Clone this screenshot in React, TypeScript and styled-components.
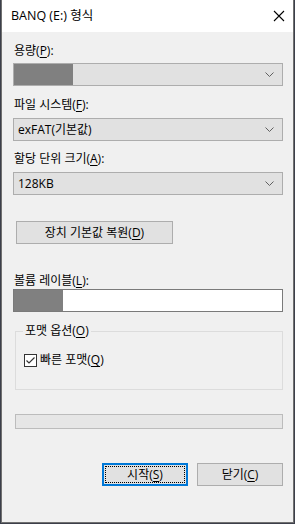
import React from 'react';
import styled, { createGlobalStyle } from 'styled-components';

const GlobalStyle = createGlobalStyle`
  html, body {
    margin: 0;
    padding: 0;
    background: #3c3f4a;
  }
  body {
    font-family: "Open Sans", "Noto Sans CJK KR", sans-serif;
    font-size: 12px;
    color: #000;
  }
`;

const Screen = styled.div`
  width: 295px;
  height: 524px;
  padding-left: 1px;
  box-sizing: border-box;
`;

const Window = styled.div`
  width: 293px;
  height: 523px;
  box-sizing: border-box;
  border: 1px solid #707070;
  border-top: none;
  background: #f0f0f0;
  display: flex;
  flex-direction: column;
`;

const TitleBar = styled.div`
  height: 31px;
  flex: none;
  background: #fff;
  display: flex;
  align-items: center;
  justify-content: space-between;
  padding: 0 8px 1px 9px;
`;

const Title = styled.span`
  font-size: 12.5px;
  line-height: 16px;
`;

const Body = styled.div`
  flex: 1;
  display: flex;
  flex-direction: column;
  padding: 0 10px 0 11px;
`;

const Label = styled.div<{ $top: number }>`
  margin-top: ${p => p.$top}px;
  padding-left: 1px;
  line-height: 16px;
  height: 16px;
`;

const Key = styled.span`
  text-decoration: underline;
  text-underline-offset: 2px;
`;

const Combo = styled.div<{ $top: number }>`
  margin-top: ${p => p.$top}px;
  height: 23px;
  box-sizing: border-box;
  border: 1px solid #adadad;
  background: #e1e1e1;
  display: flex;
  align-items: center;
  padding: 0 8px 0 4px;
  position: relative;
`;

const ComboText = styled.span`
  flex: 1;
  line-height: 16px;
`;

const Redacted = styled.div<{ $w: number }>`
  position: absolute;
  left: 0;
  top: 0;
  bottom: 0;
  width: ${p => p.$w}px;
  background: #808080;
`;

const TextBox = styled.div<{ $top: number }>`
  margin-top: ${p => p.$top}px;
  height: 23px;
  box-sizing: border-box;
  border: 1px solid #7a7a7a;
  background: #fff;
  position: relative;
`;

const PushButton = styled.button<{ $w: number; $focus?: boolean }>`
  width: ${p => p.$w}px;
  height: 23px;
  box-sizing: border-box;
  border: ${p => (p.$focus ? '2px solid #0078d7' : '1px solid #adadad')};
  background: #e1e1e1;
  font: inherit;
  color: #000;
  padding: 0;
  display: flex;
  align-items: center;
  justify-content: center;
  position: relative;
  line-height: 16px;
  &::after {
    content: '';
    display: ${p => (p.$focus ? 'block' : 'none')};
    position: absolute;
    inset: 1px;
    border: 1px dotted #000;
  }
`;

const RestoreRow = styled.div`
  margin-top: 26px;
  padding-left: 3px;
`;

const GroupBox = styled.fieldset`
  margin: 11px 0 0 2px;
  padding: 13px 0 0 8px;
  height: 67px;
  box-sizing: border-box;
  border: 1px solid #dcdcdc;
  min-width: 0;
`;

const Legend = styled.legend`
  padding: 0 2px;
  margin-left: -1px;
  line-height: 16px;
`;

const CheckRow = styled.label`
  display: flex;
  align-items: center;
  gap: 3px;
  line-height: 16px;
`;

const CheckBox = styled.span`
  width: 13px;
  height: 13px;
  box-sizing: border-box;
  border: 1px solid #333;
  background: #fff;
  display: flex;
  align-items: center;
  justify-content: center;
`;

const Progress = styled.div`
  margin: 24px 0 0 2px;
  height: 15px;
  box-sizing: border-box;
  border: 1px solid #bcbcbc;
  background: #e6e6e6;
`;

const Actions = styled.div`
  margin-top: 34px;
  display: flex;
  justify-content: flex-end;
  gap: 9px;
`;

const Chevron = () => (
  <svg width="9" height="5" viewBox="0 0 9 5">
    <path d="M0.5 0.5 L4.5 4.5 L8.5 0.5" fill="none" stroke="#606060" strokeWidth="1" />
  </svg>
);

const CloseIcon = () => (
  <svg width="12" height="12" viewBox="0 0 12 12">
    <path d="M1 1 L11 11 M11 1 L1 11" stroke="#000" strokeWidth="1.1" />
  </svg>
);

const CheckMark = () => (
  <svg width="11" height="11" viewBox="0 0 11 11">
    <path d="M1.5 5.5 L4 8 L9.5 2.5" fill="none" stroke="#333" strokeWidth="1.2" />
  </svg>
);

const App = () => {
  return (
    <>
      <GlobalStyle />
      <Screen>
        <Window>
          <TitleBar>
            <Title>BANQ (E:) 형식</Title>
            <CloseIcon />
          </TitleBar>
          <Body>
            <Label $top={11}>
              용량(<Key>P</Key>):
            </Label>
            <Combo $top={4}>
              <Redacted $w={59} />
              <ComboText />
              <Chevron />
            </Combo>

            <Label $top={11}>
              파일 시스템(<Key>F</Key>):
            </Label>
            <Combo $top={5}>
              <ComboText>exFAT(기본값)</ComboText>
              <Chevron />
            </Combo>

            <Label $top={10}>
              할당 단위 크기(<Key>A</Key>):
            </Label>
            <Combo $top={5}>
              <ComboText>128KB</ComboText>
              <Chevron />
            </Combo>

            <RestoreRow>
              <PushButton $w={157}>
                장치 기본값 복원(<Key>D</Key>)
              </PushButton>
            </RestoreRow>

            <Label $top={29}>
              볼륨 레이블(<Key>L</Key>):
            </Label>
            <TextBox $top={0}>
              <Redacted $w={49} />
            </TextBox>

            <GroupBox>
              <Legend>
                포맷 옵션(<Key>O</Key>)
              </Legend>
              <CheckRow>
                <CheckBox>
                  <CheckMark />
                </CheckBox>
                <span>
                  빠른 포맷(<Key>Q</Key>)
                </span>
              </CheckRow>
            </GroupBox>

            <Progress />

            <Actions>
              <PushButton $w={86} $focus>
                시작(<Key>S</Key>)
              </PushButton>
              <PushButton $w={86}>
                닫기(<Key>C</Key>)
              </PushButton>
            </Actions>
          </Body>
        </Window>
      </Screen>
    </>
  );
};

export default App;
